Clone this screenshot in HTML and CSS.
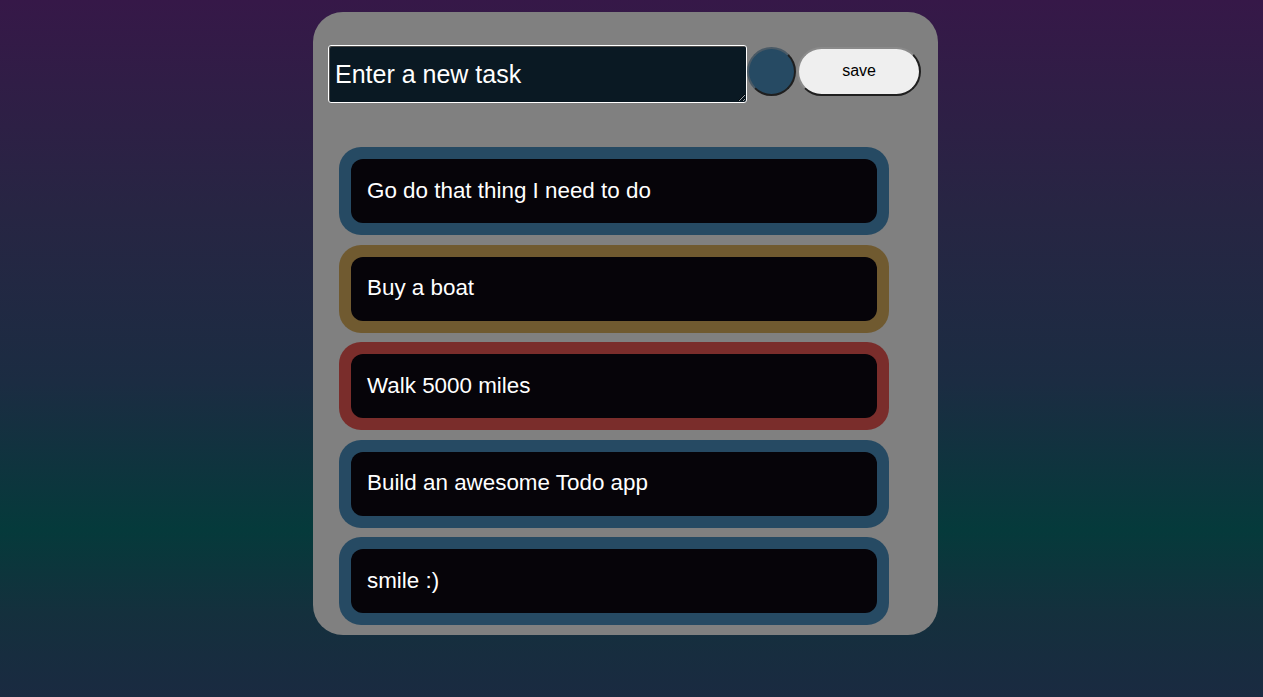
FILE: index.html
```html
<!DOCTYPE html>
<html lang="en">
<head>
<meta charset="utf-8">
<title>Todo</title>
<link rel="stylesheet" href="styles.css">
</head>
<body>
<main class="stage">
  <section class="card">
    <form class="entry">
      <textarea class="task-input" placeholder="Enter a new task"></textarea>
      <button type="button" class="color-btn" aria-label="colour"></button>
      <button type="button" class="save-btn">save</button>
    </form>
    <ul class="todos">
      <li class="todo blue"><div class="todo-inner">Go do that thing I need to do</div></li>
      <li class="todo gold"><div class="todo-inner">Buy a boat</div></li>
      <li class="todo red"><div class="todo-inner">Walk 5000 miles</div></li>
      <li class="todo blue"><div class="todo-inner">Build an awesome Todo app</div></li>
      <li class="todo blue"><div class="todo-inner">smile :)</div></li>
    </ul>
  </section>
</main>
</body>
</html>
```
FILE: styles.css
```css
* { box-sizing: border-box; }
html, body { margin: 0; padding: 0; }
body {
  min-height: 697px;
  font-family: "Liberation Sans", Arial, sans-serif;
  background: linear-gradient(to bottom, #361848 0%, #272543 30%, #1b2c42 55%, #053a3b 76%, #14303d 88%, #1a2a41 100%);
}
.stage {
  display: flex;
  justify-content: center;
  padding: 12px 12px 0 0;
}
.card {
  width: 625px;
  background: #808080;
  border-radius: 30px;
  padding: 33px 17px 10px 15px;
}
.entry {
  display: flex;
  align-items: flex-start;
  margin: 0;
}
.task-input {
  width: 420px;
  height: 58px;
  margin: 0;
  background: #0a1923;
  color: #fff;
  font-family: "Liberation Sans", Arial, sans-serif;
  font-size: 25px;
  line-height: 29px;
  padding: 14px 6px;
  border: 1px solid #fff;
  border-radius: 3px;
  box-shadow: inset 1px 1px 0 #4a4a4a;
  resize: both;
  overflow: hidden;
}
.task-input::placeholder { color: #fff; opacity: 1; }
.color-btn {
  width: 49px;
  height: 49px;
  margin: 2px 0 0 0;
  padding: 0;
  border-radius: 50%;
  background: #264a63;
  border: 2px solid;
  border-color: #4a5a66 #1f1f1f #1f1f1f #4a5a66;
}
.save-btn {
  width: 124px;
  height: 49px;
  margin: 2px 0 0 1px;
  border-radius: 25px;
  background: #efefef;
  border: 2px solid;
  border-color: #8a8a8a #1f1f1f #1f1f1f #8a8a8a;
  font-family: "Liberation Sans", Arial, sans-serif;
  font-size: 16px;
  line-height: 18px;
  padding: 0 0 2px;
  color: #000;
}
.todos {
  list-style: none;
  margin: 44px 0 0 11px;
  padding: 0;
  display: flex;
  flex-direction: column;
  gap: 9.5px;
}
.todo {
  width: 550px;
  height: 88px;
  padding: 12px;
  border-radius: 22px;
}
.todo.blue { background: #264a63; }
.todo.gold { background: #705a30; }
.todo.red { background: #7a2d2b; }
.todo-inner {
  height: 64px;
  background: #060409;
  border-radius: 12px;
  color: #fff;
  font-size: 22.4px;
  display: flex;
  align-items: center;
  padding-left: 16px;
  padding-bottom: 1px;
}
```
